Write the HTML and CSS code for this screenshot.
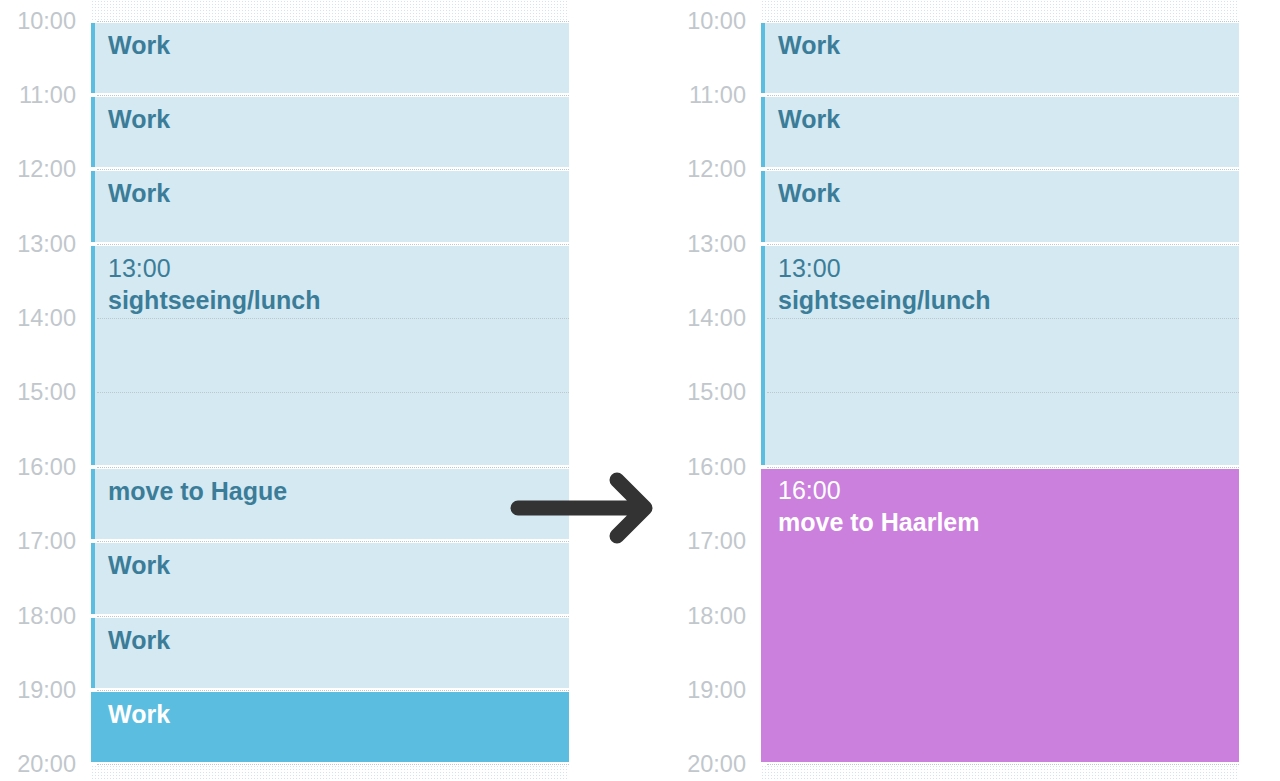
FILE: index.html
```html
<!DOCTYPE html>
<html>
<head>
<meta charset="utf-8">
<link rel="stylesheet" href="styles.css">
</head>
<body>
<div class="page">
  <section class="panel">
    <div class="pre"></div>
    <div class="post"></div>
    <div class="label r2"><span>10:00</span></div>
    <div class="label r3"><span>11:00</span></div>
    <div class="label r4"><span>12:00</span></div>
    <div class="label r5"><span>13:00</span></div>
    <div class="label r6"><span>14:00</span></div>
    <div class="label r7"><span>15:00</span></div>
    <div class="label r8"><span>16:00</span></div>
    <div class="label r9"><span>17:00</span></div>
    <div class="label r10"><span>18:00</span></div>
    <div class="label r11"><span>19:00</span></div>
    <div class="label r12"><span>20:00</span></div>
    <div class="hline r2"></div><div class="hline r3"></div><div class="hline r4"></div><div class="hline r5"></div><div class="hline r6"></div><div class="hline r7"></div><div class="hline r8"></div><div class="hline r9"></div><div class="hline r10"></div><div class="hline r11"></div><div class="hline r12"></div>
    <div class="event light r2 s1"><div class="title">Work</div></div>
    <div class="event light r3 s1"><div class="title">Work</div></div>
    <div class="event light r4 s1"><div class="title">Work</div></div>
    <div class="event light r5 s3"><div class="time">13:00</div><div class="title">sightseeing/lunch</div></div>
    <div class="event light r8 s1"><div class="title">move to Hague</div></div>
    <div class="event light r9 s1"><div class="title">Work</div></div>
    <div class="event light r10 s1"><div class="title">Work</div></div>
    <div class="event solid r11 s1"><div class="title">Work</div></div>
  </section>
  <section class="panel">
    <div class="pre"></div>
    <div class="post"></div>
    <div class="label r2"><span>10:00</span></div>
    <div class="label r3"><span>11:00</span></div>
    <div class="label r4"><span>12:00</span></div>
    <div class="label r5"><span>13:00</span></div>
    <div class="label r6"><span>14:00</span></div>
    <div class="label r7"><span>15:00</span></div>
    <div class="label r8"><span>16:00</span></div>
    <div class="label r9"><span>17:00</span></div>
    <div class="label r10"><span>18:00</span></div>
    <div class="label r11"><span>19:00</span></div>
    <div class="label r12"><span>20:00</span></div>
    <div class="hline r2"></div><div class="hline r3"></div><div class="hline r4"></div><div class="hline r5"></div><div class="hline r6"></div><div class="hline r7"></div><div class="hline r8"></div><div class="hline r9"></div><div class="hline r10"></div><div class="hline r11"></div><div class="hline r12"></div>
    <div class="event light r2 s1"><div class="title">Work</div></div>
    <div class="event light r3 s1"><div class="title">Work</div></div>
    <div class="event light r4 s1"><div class="title">Work</div></div>
    <div class="event light r5 s3"><div class="time">13:00</div><div class="title">sightseeing/lunch</div></div>
    <div class="event purple r8 s4"><div class="time">16:00</div><div class="title">move to Haarlem</div></div>
  </section>
  <svg class="arrow" width="170" height="90" viewBox="500 465 170 90">
    <path d="M518 508 L645 508 M617 480 L645 508 L617 536" fill="none" stroke="#333333" stroke-width="15" stroke-linecap="round" stroke-linejoin="round"/>
  </svg>
</div>
</body>
</html>
```
FILE: styles.css
```css
html, body {
  margin: 0;
  padding: 0;
  background: #ffffff;
}
body {
  width: 1280px;
  height: 781px;
  overflow: hidden;
  font-family: "Liberation Sans", Arial, sans-serif;
}
.page {
  position: relative;
  display: flex;
  gap: 101px;
  height: 781px;
}
.panel {
  display: grid;
  grid-template-columns: 76px 15px 478px;
  grid-template-rows: 20.5px repeat(10, 74.4px) 1fr;
  height: 781px;
}
.pre, .post {
  grid-column: 3;
  background-color: #ffffff;
  background-image: radial-gradient(circle, #d2e4ee 0.9px, transparent 1px);
  background-size: 3px 3px;
}
.pre { grid-row: 1; margin-bottom: 1px; }
.post { grid-row: 12; margin-top: 1px; }

.label {
  grid-column: 1;
  align-self: start;
  height: 0;
  display: flex;
  align-items: center;
  justify-content: flex-end;
  color: #c1c7cc;
  font-size: 23.5px;
  line-height: 28px;
}
.hline {
  grid-column: 3;
  align-self: start;
  height: 0;
  border-top: 1px dotted #bcc8cf;
  margin-left: 6px;
  z-index: 1;
}
.r2 { grid-row-start: 2; }
.r3 { grid-row-start: 3; }
.r4 { grid-row-start: 4; }
.r5 { grid-row-start: 5; }
.r6 { grid-row-start: 6; }
.r7 { grid-row-start: 7; }
.r8 { grid-row-start: 8; }
.r9 { grid-row-start: 9; }
.r10 { grid-row-start: 10; }
.r11 { grid-row-start: 11; }
.r12 { grid-row-start: 12; }
.s1 { grid-row-end: span 1; }
.s3 { grid-row-end: span 3; }
.s4 { grid-row-end: span 4; }

.event {
  grid-column: 3;
  margin: 2px 0 2px 0;
  padding: 6px 12px 0 13px;
  border-left: 4px solid #5bbde0;
  font-size: 25px;
  line-height: 32px;
  overflow: hidden;
}
.event .title { font-weight: bold; }
.event.light {
  background: #d4e9f2;
  color: #3b7d98;
}
.event.solid {
  background: #5bbde0;
  color: #ffffff;
  z-index: 2;
}
.event.purple {
  background: #cb80dd;
  border-left-color: #cb80dd;
  color: #ffffff;
  z-index: 2;
  padding-top: 5px;
}
.arrow {
  position: absolute;
  left: 500px;
  top: 465px;
}
```
